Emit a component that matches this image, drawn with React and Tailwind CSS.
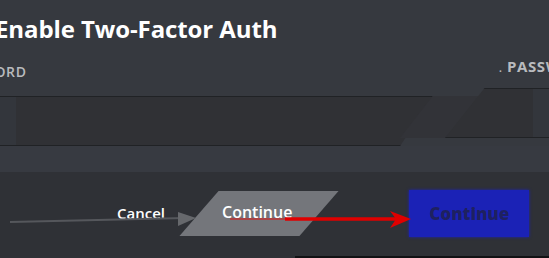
export default function App() {
  return (
    <div className="relative w-[549px] h-[258px] overflow-hidden bg-[#36393f] flex flex-col" style={{ fontFamily: '"Open Sans", "Noto Sans", sans-serif' }}>
      {/* header */}
      <div className="h-[96px] flex flex-col">
        <div className="-ml-[5px] mt-[13px] text-[24px] leading-[32px] font-bold text-white whitespace-nowrap tracking-[-0.1px]">
          Enable Two-Factor Auth
        </div>
        <div className="-ml-[55px] mt-[18px] text-[14px] leading-[17px] font-semibold text-[#b9bbbe] tracking-[0.6px] whitespace-nowrap">PASSWORD</div>
      </div>
      {/* input row */}
      <div className="relative h-[50px] w-[549px]">
        <div className="absolute left-0 top-0 h-[50px] w-[433px] bg-[#303135] border-y border-[#202225] [clip-path:polygon(0_0,100%_0,92.4%_100%,0_100%)] flex">
          <div className="w-[16px] h-full bg-[#33363c]" />
        </div>
        <div className="absolute left-[400px] top-0 h-[42px] w-[86px] bg-[#323338] [clip-path:polygon(38%_0,100%_0,52%_100%,0_100%)]" />
      </div>
      {/* band */}
      <div className="h-[26px] bg-[#373a41]" />
      {/* footer */}
      <div className="flex-1 bg-[#2f3136] flex items-start pt-[18px]">
        <div className="ml-[117px] mt-[13px] text-[15px] leading-[20px] font-semibold text-white">Cancel</div>
        <div className="relative ml-[14px] w-[160px] h-[46px]">
          <div className="absolute left-[20px] top-[1px] w-[120px] h-[45px] bg-[#74767b] -skew-x-[41deg]" />
        </div>
        <div className="ml-[70px] w-[120px] h-[47px] bg-[#1b22b6] flex items-center justify-center shadow-[0_0_3px_#1b22b6]">
          <span className="text-[17px] font-extrabold text-[#1e2160] blur-[0.6px]">Continue</span>
        </div>
      </div>

      {/* shifted right layer (overlay) */}
      <div className="absolute left-[499px] top-[57px] text-[15px] leading-[18px] font-bold text-[#b9bbbe] whitespace-nowrap tracking-[0.6px]">
        <span className="text-[10px]">.</span> PASSWORD
      </div>
      <div className="absolute left-[445px] top-[88px] w-[110px] h-[50px] bg-[#303135] border-y border-[#202225] [clip-path:polygon(36%_0,100%_0,100%_100%,0_100%)] flex justify-end">
        <div className="w-[22px] h-full bg-[#33363c]" />
      </div>

      {/* gray arrow */}
      <svg className="absolute left-0 top-[200px]" width="200" height="40" viewBox="0 0 200 40">
        <line x1="10" y1="22" x2="185" y2="18" stroke="#55575c" strokeWidth="2" />
        <polygon points="178,12 196,18 178,26" fill="#66686c" />
      </svg>

      {/* continue text on gray button */}
      <div className="absolute left-[222px] top-[202px] text-[16px] leading-[20px] font-semibold text-white">Continue</div>

      {/* red arrow */}
      <svg className="absolute left-[230px] top-[205px]" width="185" height="30" viewBox="0 0 185 30">
        <line x1="0" y1="14" x2="60" y2="14" stroke="#e01010" strokeOpacity="0.5" strokeWidth="2" />
        <line x1="55" y1="14" x2="168" y2="14" stroke="#e00000" strokeWidth="3.5" />
        <polygon points="160,6 181,14 160,23 166,14" fill="#e00000" />
      </svg>

      {/* bottom edge line */}
      <div className="absolute left-[295px] bottom-0 w-[254px] h-[2px] bg-[#111214]" />
    </div>
  );
}
